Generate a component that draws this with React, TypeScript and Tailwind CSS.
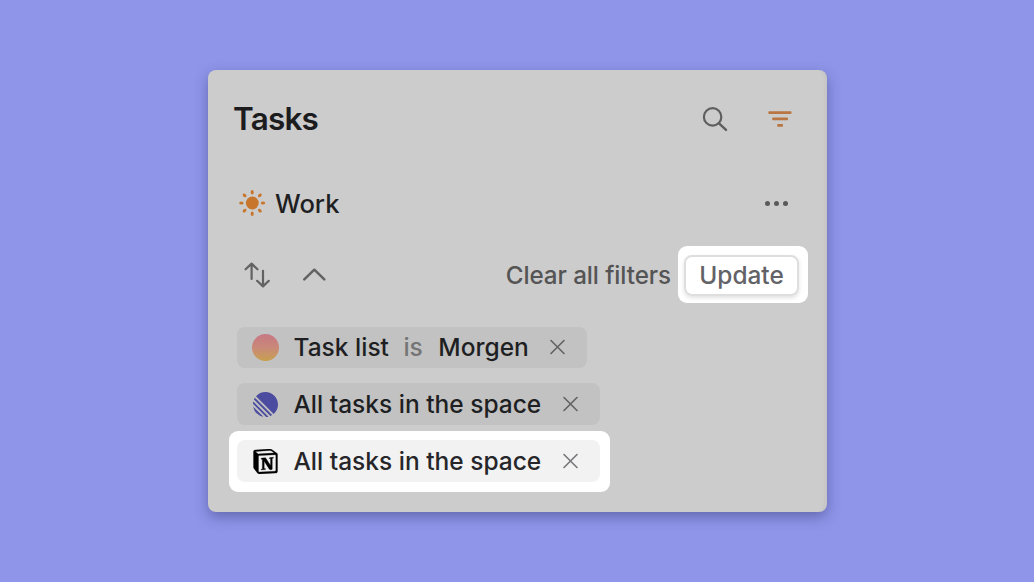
import type { ReactNode } from 'react';
import { SiLinear, SiNotion } from 'react-icons/si';

function SearchIcon() {
    return (
        <svg width="26" height="26" viewBox="0 0 26 26" fill="none" stroke="#5f5f5f" strokeWidth="2.2" strokeLinecap="round">
            <circle cx="10.6" cy="10.9" r="8.7" />
            <path d="M17 17.3 L24 23.8" strokeWidth="2.5" />
        </svg>
    );
}

function FilterIcon() {
    return (
        <svg width="24" height="18" viewBox="0 0 24 18" fill="#b97643">
            <rect x="0.3" y="1.2" width="23.2" height="2.7" rx="0.8" />
            <rect x="4.2" y="7.6" width="15.8" height="2.7" rx="0.8" />
            <rect x="9.2" y="14" width="5.8" height="2.7" rx="0.8" />
        </svg>
    );
}

function SunIcon() {
    const rays = [0, 45, 90, 135, 180, 225, 270, 315];

    return (
        <svg width="26" height="26" viewBox="0 0 26 26" fill="#c8762b">
            <circle cx="13.3" cy="13" r="6.4" />
            {rays.map(angle => (
                <ellipse key={angle} cx="13.2" cy="2.2" rx="1.5" ry="2.2" transform={`rotate(${angle} 13.2 13)`} />
            ))}
        </svg>
    );
}

function SortIcon() {
    return (
        <svg width="26" height="26" viewBox="0 0 26 26" fill="none" stroke="#626262" strokeWidth="2.2" strokeLinecap="round" strokeLinejoin="round">
            <path d="M7.6 16.9 V1.9 M1.6 7.3 L7.6 1.6 L13.5 7.3" />
            <path d="M19 8.8 V24.1 M13.1 18.8 L19 24.4 L24.8 18.8" />
        </svg>
    );
}

function ChevronUp() {
    return (
        <svg width="24" height="14" viewBox="0 0 24 14" fill="none" stroke="#626262" strokeWidth="2.5" strokeLinecap="round" strokeLinejoin="round">
            <path d="M2.3 11.4 L12.3 1.7 L22.3 11.4" />
        </svg>
    );
}

function CloseIcon() {
    return (
        <svg width="16" height="16" viewBox="0 0 16 16" fill="none" stroke="currentColor" strokeWidth="1.6" strokeLinecap="round">
            <path d="M1 1.5 L14 14.5 M14 1.5 L1 14.5" />
        </svg>
    );
}

function Chip({ icon, size, highlighted = false, children }: {
    icon: ReactNode;
    size: string;
    highlighted?: boolean;
    children: ReactNode;
}) {
    return (
        <div
            className={`flex items-center rounded-lg pl-[14px] pr-[21px] ${size} ${
                highlighted ? 'bg-[#f2f2f2] text-[#26262a]' : 'bg-[#c2c2c2] text-[#1e1f22]'
            }`}
        >
            <span className="flex w-[29px] shrink-0 items-center">{icon}</span>
            <span className="ml-[13.5px] flex whitespace-pre pt-px text-[24.5px] font-medium leading-none">{children}</span>
            <button className={`ml-auto ${highlighted ? 'text-[#77777a]' : 'text-[#626262]'}`}>
                <CloseIcon />
            </button>
        </div>
    );
}

export default function App() {
    return (
        <div className="flex h-[582px] w-[1034px] items-start bg-[#8f96ea] pl-[208px] pt-[70px] font-['Inter',sans-serif]">
            <div className="flex h-[442px] w-[619px] flex-col rounded-lg bg-[#cccccc] shadow-[0_5px_14px_rgba(30,30,80,0.38),inset_-5px_0_5px_-4px_rgba(0,0,0,0.06)]">

                {/* Header */}
                <div className="mt-[24px] flex h-[50px] items-center pl-[25px] pr-[35px]">
                    <h1 className="text-[31.5px] font-semibold leading-none tracking-[-0.8px] text-[#1c1c1f]">Tasks</h1>
                    <div className="ml-auto flex items-center gap-[40px]">
                        <SearchIcon />
                        <FilterIcon />
                    </div>
                </div>

                {/* View name */}
                <div className="mt-[39px] flex h-[40px] items-center pl-[31px] pr-[39px]">
                    <SunIcon />
                    <h2 className="ml-[10px] pt-[2px] text-[25.6px] font-medium leading-none text-[#1e1f22]">Work</h2>
                    <div className="ml-auto flex gap-[4px]">
                        <span className="size-[5px] rounded-full bg-[#5a5a5a]" />
                        <span className="size-[5px] rounded-full bg-[#5a5a5a]" />
                        <span className="size-[5px] rounded-full bg-[#5a5a5a]" />
                    </div>
                </div>

                {/* Toolbar */}
                <div className="mt-[23px] flex h-[57px] items-center pl-[36px] pr-[19px]">
                    <SortIcon />
                    <span className="ml-[32px]"><ChevronUp /></span>
                    <button className="ml-auto pt-[4px] text-[24.2px] font-medium leading-none tracking-[-0.08px] text-[#545454]">Clear all filters</button>
                    <div className="ml-[7px] flex h-[57px] w-[130px] items-center justify-center rounded-[9px] bg-white">
                        <button className="mr-[3px] mt-px h-[41px] w-[115px] rounded-[8px] border-2 border-[#dedede] pt-px text-[24.4px] font-medium leading-none text-[#626267] shadow-[0_2px_4px_rgba(0,0,0,0.12)]">
                            Update
                        </button>
                    </div>
                </div>

                {/* Filters */}
                <div className="mt-[24px] flex flex-col items-start pl-[29px]">
                    <Chip
                        size="h-[41px] w-[350px] pb-px"
                        icon={<span className="ml-px mt-px size-[27px] rounded-full bg-linear-to-b from-[#c67884] via-[#c98878] to-[#c7a04c]" />}
                    >
                        <span>Task list</span>
                        <span className="ml-[14.5px] text-[#757575]">is</span>
                        <span className="ml-[15.5px]">Morgen</span>
                    </Chip>
                    <div className="mt-[15px]">
                        <Chip size="h-[42px] w-[363px]" icon={<SiLinear className="ml-[2px] size-[25px] text-[#4b4b9f]" />}>
                            All tasks in the space
                        </Chip>
                    </div>
                    <div className="-ml-[8px] mt-[6px] h-[61px] w-[381px] rounded-[9px] bg-white pl-[8px] pt-[9px]">
                        <Chip
                            size="h-[42px] w-[363px]"
                            highlighted
                            icon={<SiNotion className="ml-[2px] size-[25px] stroke-black stroke-[0.3px] text-black" />}
                        >
                            All tasks in the space
                        </Chip>
                    </div>
                </div>

            </div>
        </div>
    );
}
